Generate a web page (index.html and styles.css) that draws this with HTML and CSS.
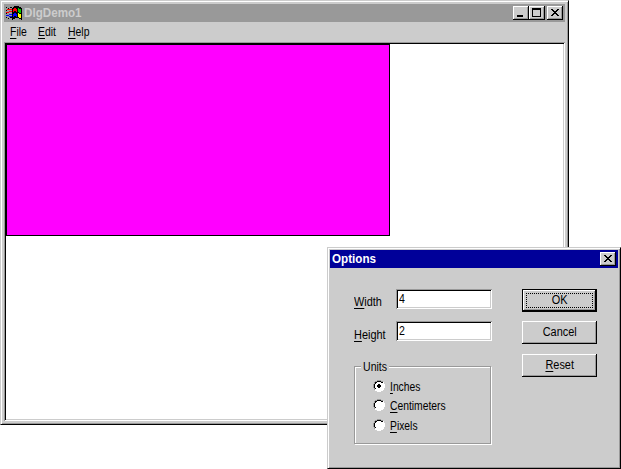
FILE: index.html
```html
<!DOCTYPE html>
<html lang="en">
<head>
<meta charset="utf-8">
<title>DlgDemo1</title>
<link rel="stylesheet" href="styles.css">
</head>
<body>
<div class="desktop">
  <section class="window main-window">
    <header class="titlebar inactive">
      <svg class="app-icon" width="16" height="16" viewBox="0 0 16 16" shape-rendering="crispEdges">
        <path fill="#000" d="M8 1h5v1h2v1h1v12h-1v-1h-2v-1h-4v1h-2v1h-1v-12h1v-1h1zM0 2h1v1h-1zM2 3h1v1h-1zM4 2h2v1h-2zM0 5h1v1h-1zM0 8h1v1h-1zM0 12h1v1h-1zM2 13h1v1h-1zM4 12h2v1h-2z"/>
        <path fill="#f00" d="M8 3h2v1h1v3h-1v-1h-2v1h-1v-3h1zM1 4h2v1h-2zM3 4h3v1h-3zM0 7h3v1h-3zM3 6h3v1h-3z"/>
        <path fill="#0c0" d="M12 3h1v1h2v4h-2v-1h-1z"/>
        <path fill="#00f" d="M8 8h2v1h1v3h-1v-1h-2v1h-1v-3h1zM0 10h3v1h-3zM3 9h3v1h-3zM3 11h3v1h-3z"/>
        <path fill="#ff0" d="M12 8h1v1h2v4h-2v-1h-1z"/>
      </svg>
      <h1 class="title">DlgDemo1</h1>
      <div class="controls">
        <button class="ctl" aria-label="Minimize"><svg width="16" height="14" shape-rendering="crispEdges"><path d="M4 9h6v2h-6z"/></svg></button>
        <button class="ctl" aria-label="Maximize"><svg width="16" height="14" shape-rendering="crispEdges"><path fill-rule="evenodd" d="M3 2h9v9h-9zM4 4v6h7v-6z"/></svg></button>
        <button class="ctl close" aria-label="Close"><svg width="16" height="14" shape-rendering="crispEdges"><path d="M4 3h2v1h1v1h2v-1h1v-1h2v1h-1v1h-1v1h-1v1h1v1h1v1h1v1h-2v-1h-1v-1h-2v1h-1v1h-2v-1h1v-1h1v-1h1v-1h-1v-1h-1v-1h-1z"/></svg></button>
      </div>
    </header>
    <nav class="menu">
      <span class="txt"><u>F</u>ile</span>
      <span class="txt"><u>E</u>dit</span>
      <span class="txt"><u>H</u>elp</span>
    </nav>
    <div class="client"><div class="shape"></div></div>
  </section>

  <section class="window dialog">
    <header class="titlebar">
      <h2 class="title">Options</h2>
      <div class="controls">
        <button class="ctl close" aria-label="Close"><svg width="16" height="14" shape-rendering="crispEdges"><path d="M4 3h2v1h1v1h2v-1h1v-1h2v1h-1v1h-1v1h-1v1h1v1h1v1h1v1h-2v-1h-1v-1h-2v1h-1v1h-2v-1h1v-1h1v-1h1v-1h-1v-1h-1v-1h-1z"/></svg></button>
      </div>
    </header>
    <div class="dialog-body">
      <div class="form">
        <div class="row"><span class="label"><span class="txt"><u>W</u>idth</span></span><div class="field"><span class="txt">4</span></div></div>
        <div class="row"><span class="label low"><span class="txt"><u>H</u>eight</span></span><div class="field"><span class="txt">2</span></div></div>
        <div class="group" role="group">
          <div class="legend"><span class="txt">Units</span></div>
          <div class="option"><svg class="radio" width="12" height="12"><use href="#radio"/><path d="M5 4h2v1h1v2h-1v1h-2v-1h-1v-2h1z" shape-rendering="crispEdges"/></svg><span class="txt"><u>I</u>nches</span></div>
          <div class="option"><svg class="radio" width="12" height="12"><use href="#radio"/></svg><span class="txt"><u>C</u>entimeters</span></div>
          <div class="option last"><svg class="radio" width="12" height="12"><use href="#radio"/></svg><span class="txt"><u>P</u>ixels</span></div>
        </div>
      </div>
      <div class="buttons">
        <button class="btn default"><span class="txt">OK</span></button>
        <button class="btn"><span class="txt">Cancel</span></button>
        <button class="btn"><span class="txt"><u>R</u>eset</span></button>
      </div>
    </div>
  </section>
</div>
<svg class="defs" width="0" height="0">
  <symbol id="radio" viewBox="0 0 12 12">
    <g shape-rendering="crispEdges">
      <path fill="#fff" d="M4 1h4v1h2v2h1v4h-1v2h-2v1h-4v-1h-2v-2h-1v-4h1v-2h2z"/>
      <path fill="#999" d="M4 0h4v1h-4zM2 1h2v1h-2zM8 1h2v1h-2zM1 2h1v2h-1zM0 4h1v4h-1zM1 8h1v2h-1z"/>
      <path fill="#000" d="M4 1h4v1h-4zM2 2h2v1h-1v1h-1zM8 2h2v1h-2zM1 4h1v4h-1zM2 8h1v1h-1z"/>
      <path fill="#fff" d="M10 2h1v2h1v4h-1v2h-1v1h-2v1h-4v-1h-2v-1h2v-1h4v-1h1v-1h1z"/>
    </g>
  </symbol>
</svg>
</body>
</html>
```
FILE: styles.css
```css
* { box-sizing: border-box; }
body { margin: 0; background: #fff; overflow: hidden; font: 12px/14px "Liberation Sans", sans-serif; color: #000; }
.desktop { position: relative; width: 621px; height: 469px; }
.defs { position: absolute; }
.window {
  position: absolute;
  background: #ccc;
  border: 1px solid;
  border-color: #ccc #000 #000 #ccc;
  box-shadow: inset 1px 1px #fff, inset -1px -1px #999;
}
.main-window { left: 0; top: 0; width: 569px; height: 425px; padding: 3px; display: flex; flex-direction: column; }
.dialog { left: 327px; top: 247px; width: 294px; height: 222px; padding: 2px; }

.titlebar { display: flex; align-items: center; height: 18px; padding: 0 2px; background: #009; color: #fff; }
.titlebar.inactive { background: #999; color: #ccc; }
.app-icon { display: block; margin-right: 2px; }
.title { margin: 0; font-size: 12px; line-height: 18px; font-weight: bold; transform: scaleX(.97); transform-origin: left; }
.controls { display: flex; margin-left: auto; }
.ctl {
  display: block; width: 16px; height: 14px; padding: 0; border: 0; background: #ccc;
  box-shadow: inset -1px -1px #000, inset 1px 1px #fff, inset -2px -2px #999;
}
.ctl svg { display: block; }
.ctl + .close { margin-left: 2px; }

.txt { display: inline-block; transform: scaleX(.88); transform-origin: left; white-space: nowrap; }
u { text-underline-offset: 2px; text-decoration-thickness: 1px; text-decoration-skip-ink: none; }
.menu { display: grid; grid-template-columns: 28px 30px 40px; height: 20px; padding: 3px 0 0 6px; }
.menu .txt { transform: scaleX(.87); }
.client {
  flex: 1; padding: 2px; background: #fff;
  box-shadow: inset 1px 1px #999, inset -1px -1px #fff, inset 2px 2px #000, inset -2px -2px #ccc;
}
.shape { width: 384px; height: 192px; background: #f0f; border: 1px solid #000; }

.dialog-body { display: flex; justify-content: space-between; padding: 21px 21px 0 24px; }
.form { width: 138px; }
.row { display: flex; height: 20px; margin-bottom: 12px; }
.label { width: 42px; padding-top: 6px; }
.label.low { padding-top: 7px; }
.label .txt { transform: scaleX(.91); }
.field {
  width: 96px; padding: 3px; background: #fff;
  box-shadow: inset 1px 1px #999, inset -1px -1px #fff, inset 2px 2px #000, inset -2px -2px #ccc;
}
.group {
  width: 137px; height: 78px; margin-top: 25px; padding-left: 18px; border: 1px solid #999;
  box-shadow: 1px 1px #fff, inset 1px 1px #fff;
}
.legend { width: 28px; height: 14px; margin: -7px 0 6px -12px; padding-left: 2px; background: #ccc; }
.option { display: flex; gap: 5px; height: 19px; }
.option .txt { transform: scaleX(.86); }
.option.last { margin-top: 1px; }
.radio { display: block; }
.buttons { display: flex; flex-direction: column; width: 75px; }
.btn {
  height: 23px; padding: 0 0 2px; margin-bottom: 10px; border: 0; background: #ccc; color: #000;
  font: inherit; text-align: center;
  box-shadow: inset -1px -1px #000, inset 1px 1px #fff, inset -2px -2px #999;
}
.btn .txt { transform: scaleX(.91); transform-origin: center; }
.btn.default {
  margin-bottom: 9px; outline: 1px dotted #000; outline-offset: -5px;
  box-shadow: inset 0 0 0 1px #000, inset -2px -2px #000, inset 2px 2px #fff, inset -3px -3px #999;
}
```
